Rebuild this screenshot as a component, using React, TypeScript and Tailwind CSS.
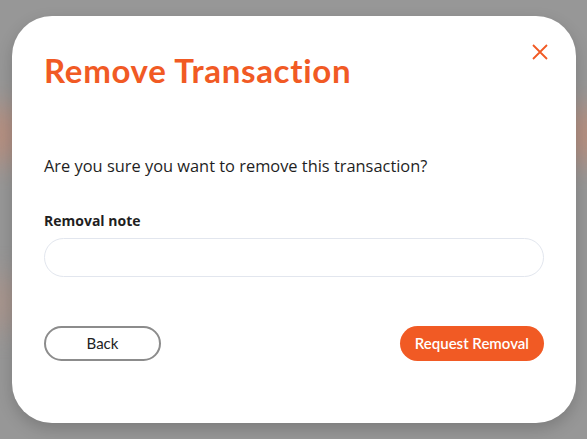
export default function App() {
  return (
    <div
      className="relative h-[439px] w-[587px] overflow-hidden bg-[#979797]"
      style={{ fontFamily: 'Lato, "Open Sans", sans-serif' }}
    >
      {/* blurred page behind the overlay */}
      <div className="absolute left-[-30px] top-[105px] h-[60px] w-[60px] rounded-full bg-[#c98a72] opacity-60 blur-[14px]" />
      <div className="absolute left-[-30px] top-[275px] h-[55px] w-[60px] rounded-full bg-[#b79283] opacity-50 blur-[14px]" />
      <div className="absolute right-[-30px] top-[105px] h-[60px] w-[60px] rounded-full bg-[#c98a72] opacity-60 blur-[14px]" />

      <div className="relative ml-[12px] mt-[16px] flex h-[407px] w-[564px] flex-col rounded-[40px] bg-white px-8 pt-[32px] shadow-[0_6px_16px_rgba(0,0,0,0.18)]">
        <button className="absolute right-[28px] top-[28px] text-[#f15a24]">
          <svg width="16" height="16" viewBox="0 0 16 16" fill="none" stroke="currentColor" strokeWidth="1.8">
            <path d="M1 1L15 15M15 1L1 15" />
          </svg>
        </button>

        <h1 className="text-[33px] font-bold leading-[44px] tracking-[0.7px] text-[#f15a24]">Remove Transaction</h1>

        <p
          className="mt-[62px] text-[16.4px] leading-[24px] text-[#1f1f1f]"
          style={{ fontFamily: '"Open Sans", sans-serif' }}
        >
          Are you sure you want to remove this transaction?
        </p>

        <label
          className="mt-[33px] text-[14px] font-bold leading-[20px] text-[#1f1f1f]"
          style={{ fontFamily: '"Open Sans", sans-serif' }}
        >
          Removal note
        </label>
        <input
          type="text"
          className="mt-[7px] h-[39px] w-full rounded-full border border-[#e2e6ee] px-4 text-[14px] outline-none"
        />

        <div className="mt-[49px] flex items-center justify-between">
          <button className="h-[35px] w-[117px] rounded-full border-2 border-[#8c8c8c] text-[15px] text-[#222]">
            Back
          </button>
          <button className="h-[35px] rounded-full bg-[#f15a24] px-[15px] text-[15px] font-semibold text-white">
            Request Removal
          </button>
        </div>
      </div>
    </div>
  );
}
